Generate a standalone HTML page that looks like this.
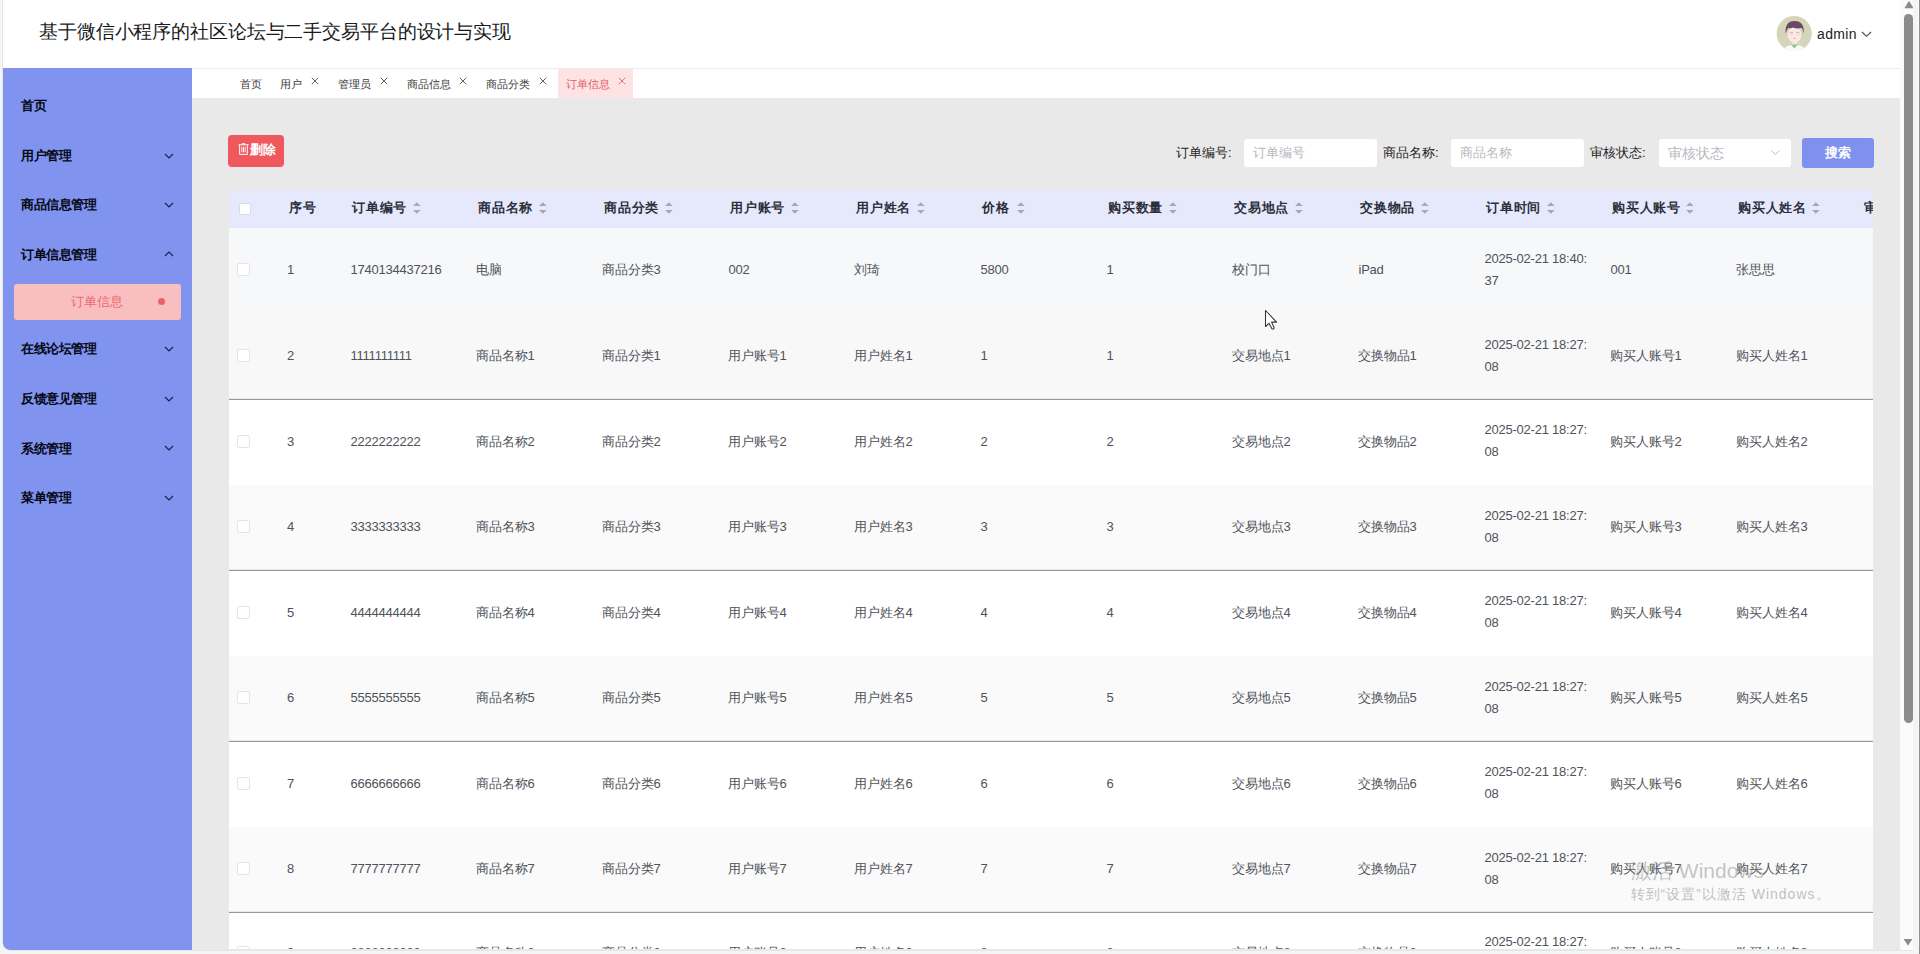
<!DOCTYPE html>
<html><head><meta charset="utf-8">
<style>
*{box-sizing:border-box;margin:0;padding:0}
html,body{width:1920px;height:954px;overflow:hidden;background:#f4f5f5;font-family:"Liberation Sans",sans-serif}
.abs{position:absolute}
#win{position:absolute;left:3px;top:0;width:1916px;height:950px;background:#fff;overflow:hidden;border-bottom-left-radius:7px;border-bottom-right-radius:7px}
#lb{position:absolute;left:2px;top:0;width:1px;height:944px;background:#e4e4e4}
#rb{position:absolute;left:1918.5px;top:0;width:1.5px;height:954px;background:#8f8f8f}
.t{position:absolute;white-space:nowrap;line-height:1}
#header{position:absolute;left:0;top:0;width:1897px;height:68px;background:#fff}
#title{left:36px;top:22px;letter-spacing:-0.12px;font-size:19px;color:#1a1a1a}
#side{position:absolute;left:0;top:68px;width:189px;height:882px;background:#8093ef}
.mi{position:absolute;left:18px;font-size:13px;font-weight:bold;color:#050814;line-height:1;letter-spacing:-0.45px}
.chev{position:absolute;left:160.5px;width:10px;height:6px}
#tabs{position:absolute;left:189px;top:68px;width:1708px;height:30px;background:#fff;border-top:1px solid #ececec}
.tab{position:absolute;top:10px;font-size:11px;color:#3f3f3f;line-height:1;white-space:nowrap}
.tx{position:absolute;top:6px;font-size:11px;color:#555;line-height:1}
#content{position:absolute;left:189px;top:98px;width:1709px;height:852px;background:#e9e9e9}
#sb{position:absolute;left:1897.3px;top:0;width:21px;height:949px;background:#fbfbfb}
.lbl{font-size:13px;color:#222;}
.inp{position:absolute;background:#fff;border-radius:3px;height:28px;top:139px}
.ph{font-size:13px;color:#b6b9c0}
.hd{font-size:13px;font-weight:bold;color:#2b2f3a;letter-spacing:0.7px}
.cell{font-size:13px;color:#4f5259}
.n{letter-spacing:-0.23px}
.cb{position:absolute;width:13px;height:13px;background:#fff;border:1px solid #e3e5ea;border-radius:2px}
</style></head><body>
<div id="win">

<div id="header"><div class="t" id="title">基于微信小程序的社区论坛与二手交易平台的设计与实现</div>
<svg class="abs" style="left:1773px;top:15px" width="36" height="36" viewBox="0 0 36 36">
<defs><clipPath id="cp"><circle cx="18.2" cy="18.6" r="17.6"/></clipPath></defs>
<circle cx="18.2" cy="18.6" r="17.6" fill="#d4d5b9"/>
<g clip-path="url(#cp)">
<path d="M5 40 Q6 30.5 18.4 29.8 Q30.5 30.5 31.5 40 Z" fill="#fbfbf9"/>
<rect x="15.8" y="24" width="5.2" height="6.5" fill="#f8e2d8"/>
<path d="M14.8 29.4 L18.4 33.4 L22 29.4 Z" fill="#8fc79c"/>
<ellipse cx="18.6" cy="19.8" rx="6.9" ry="7.6" fill="#fbe9e3"/>
<path d="M9.6 18.5 Q8.6 5.9 18.6 5.9 Q28.6 5.9 27.8 18.5 Q27 14.5 25.6 12.8 Q21 14.5 17 12.6 Q14 14 12.2 12.8 Q10.8 15 9.6 18.5 Z" fill="#6a4868"/>
<path d="M13.8 17.8 Q15.4 17 17 17.8 M20.2 17.8 Q21.8 17 23.4 17.8" fill="none" stroke="#b8948c" stroke-width="0.7"/>
<path d="M14 19.6 h2.6 M20.6 19.6 h2.6" stroke="#d9c4bc" stroke-width="0.6"/>
<ellipse cx="18.5" cy="23.3" rx="1.3" ry="0.6" fill="#e8a0a0"/>
</g></svg>
<div class="t" style="left:1814px;top:27px;font-size:14px;color:#222;letter-spacing:0.35px">admin</div>
<svg class="abs" style="left:1858px;top:31px" width="11" height="7" viewBox="0 0 11 7"><path d="M1 1 L5.5 5.3 L10 1" fill="none" stroke="#444" stroke-width="1.1"/></svg>
</div>
<div id="side">
<div class="mi" style="top:31px">首页</div>
<div class="mi" style="top:81px">用户管理</div>
<svg class="chev" style="top:84.5px" viewBox="0 0 10 6"><path d="M1 1 L5 5 L9 1" fill="none" stroke="#1b2150" stroke-width="1.2"/></svg>
<div class="mi" style="top:130px">商品信息管理</div>
<svg class="chev" style="top:134px" viewBox="0 0 10 6"><path d="M1 1 L5 5 L9 1" fill="none" stroke="#1b2150" stroke-width="1.2"/></svg>
<div class="mi" style="top:180px">订单信息管理</div>
<svg class="chev" style="top:182.5px" viewBox="0 0 10 6"><path d="M1 5 L5 1 L9 5" fill="none" stroke="#1b2150" stroke-width="1.2"/></svg>
<div class="mi" style="top:274px">在线论坛管理</div>
<svg class="chev" style="top:277.5px" viewBox="0 0 10 6"><path d="M1 1 L5 5 L9 1" fill="none" stroke="#1b2150" stroke-width="1.2"/></svg>
<div class="mi" style="top:324px">反馈意见管理</div>
<svg class="chev" style="top:327.5px" viewBox="0 0 10 6"><path d="M1 1 L5 5 L9 1" fill="none" stroke="#1b2150" stroke-width="1.2"/></svg>
<div class="mi" style="top:374px">系统管理</div>
<svg class="chev" style="top:377px" viewBox="0 0 10 6"><path d="M1 1 L5 5 L9 1" fill="none" stroke="#1b2150" stroke-width="1.2"/></svg>
<div class="mi" style="top:423px">菜单管理</div>
<svg class="chev" style="top:426.5px" viewBox="0 0 10 6"><path d="M1 1 L5 5 L9 1" fill="none" stroke="#1b2150" stroke-width="1.2"/></svg>
<div class="abs" style="left:11px;top:216px;width:167px;height:36px;background:#f9bec0;border-radius:3px"></div>
<div class="t" style="left:68px;top:227px;font-size:13px;color:#ec6a70">订单信息</div>
<div class="abs" style="left:154.5px;top:229.5px;width:7px;height:7px;border-radius:50%;background:#e8646a"></div>
</div>
<div id="tabs">
<div class="abs" style="left:366px;top:0px;width:75px;height:29px;background:#fde3e4"></div>
<div class="tab" style="left:48px;color:#3a3a3a">首页</div>
<div class="tab" style="left:88px;color:#3a3a3a">用户</div>
<svg class="abs" style="left:119px;top:8px" width="8" height="8" viewBox="0 0 8 8"><path d="M0.8 0.8 L7.2 7.2 M7.2 0.8 L0.8 7.2" stroke="#444" stroke-width="0.85"/></svg>
<div class="tab" style="left:146px;color:#3a3a3a">管理员</div>
<svg class="abs" style="left:188px;top:8px" width="8" height="8" viewBox="0 0 8 8"><path d="M0.8 0.8 L7.2 7.2 M7.2 0.8 L0.8 7.2" stroke="#444" stroke-width="0.85"/></svg>
<div class="tab" style="left:215px;color:#3a3a3a">商品信息</div>
<svg class="abs" style="left:267px;top:8px" width="8" height="8" viewBox="0 0 8 8"><path d="M0.8 0.8 L7.2 7.2 M7.2 0.8 L0.8 7.2" stroke="#444" stroke-width="0.85"/></svg>
<div class="tab" style="left:294px;color:#3a3a3a">商品分类</div>
<svg class="abs" style="left:347px;top:8px" width="8" height="8" viewBox="0 0 8 8"><path d="M0.8 0.8 L7.2 7.2 M7.2 0.8 L0.8 7.2" stroke="#444" stroke-width="0.85"/></svg>
<div class="tab" style="left:374px;color:#de5b62">订单信息</div>
<svg class="abs" style="left:426px;top:8px" width="8" height="8" viewBox="0 0 8 8"><path d="M0.8 0.8 L7.2 7.2 M7.2 0.8 L0.8 7.2" stroke="#d9606a" stroke-width="0.85"/></svg>
</div>
<div id="content">
<div class="abs" style="left:36px;top:37px;width:56px;height:32px;background:#f0585e;border-radius:4px"></div>
<svg class="abs" style="left:46px;top:45px" width="11" height="12" viewBox="0 0 11 12"><path d="M0.3 1.8 H10.7 M4.2 1.8 V0.6 H6.8 V1.8 M1.6 1.8 V11.4 H9.4 V1.8 M3.8 3.8 V9.4 M5.5 3.8 V9.4 M7.2 3.8 V9.4" fill="none" stroke="#fff" stroke-width="0.95"/></svg>
<div class="t" style="left:58px;top:45px;font-size:13px;color:#fff;font-weight:bold">删除</div>
</div>
<div class="t lbl" style="left:1173px;top:146px">订单编号:</div>
<div class="inp" style="left:1241px;width:133px"></div><div class="t ph" style="left:1250px;top:146px">订单编号</div>
<div class="t lbl" style="left:1380px;top:146px">商品名称:</div>
<div class="inp" style="left:1448px;width:133px"></div><div class="t ph" style="left:1457px;top:146px">商品名称</div>
<div class="t lbl" style="left:1587px;top:146px">审核状态:</div>
<div class="inp" style="left:1656px;width:132px"></div><div class="t ph" style="left:1665px;top:146px;font-size:14px">审核状态</div>
<svg class="abs" style="left:1768px;top:150px" width="9" height="6" viewBox="0 0 9 6"><path d="M0.5 0.5 L4.5 4.5 L8.5 0.5" fill="none" stroke="#b9bcc2" stroke-width="1"/></svg>
<div class="abs" style="left:1799px;top:138px;width:71.5px;height:29.5px;background:#7f91ee;border-radius:3px"></div>
<div class="t" style="left:1821.5px;top:146px;font-size:13px;color:#fff;font-weight:bold">搜索</div>
<div class="abs" style="left:0;top:0;width:1870px;height:949px;overflow:hidden">
<div class="abs" style="left:227px;top:190px;width:1643px;height:38px;background:#e6e9fb"></div>
<div class="cb" style="left:236px;top:203px;width:12px;height:12px;border-color:#d9dce8"></div>
<div class="t hd" style="left:286px;top:201px">序号</div>
<div class="t hd" style="left:349.3px;top:201px">订单编号</div>
<svg class="abs" style="left:409.7px;top:202px" width="8" height="12" viewBox="0 0 8 12"><path d="M3.9 0.2 L7.7 4.0 H0.1 Z M3.9 11.8 L7.7 8.0 H0.1 Z" fill="#a4a8b6"/></svg>
<div class="t hd" style="left:475.3px;top:201px">商品名称</div>
<svg class="abs" style="left:535.7px;top:202px" width="8" height="12" viewBox="0 0 8 12"><path d="M3.9 0.2 L7.7 4.0 H0.1 Z M3.9 11.8 L7.7 8.0 H0.1 Z" fill="#a4a8b6"/></svg>
<div class="t hd" style="left:601.3px;top:201px">商品分类</div>
<svg class="abs" style="left:661.7px;top:202px" width="8" height="12" viewBox="0 0 8 12"><path d="M3.9 0.2 L7.7 4.0 H0.1 Z M3.9 11.8 L7.7 8.0 H0.1 Z" fill="#a4a8b6"/></svg>
<div class="t hd" style="left:727.3px;top:201px">用户账号</div>
<svg class="abs" style="left:787.7px;top:202px" width="8" height="12" viewBox="0 0 8 12"><path d="M3.9 0.2 L7.7 4.0 H0.1 Z M3.9 11.8 L7.7 8.0 H0.1 Z" fill="#a4a8b6"/></svg>
<div class="t hd" style="left:853.3px;top:201px">用户姓名</div>
<svg class="abs" style="left:913.7px;top:202px" width="8" height="12" viewBox="0 0 8 12"><path d="M3.9 0.2 L7.7 4.0 H0.1 Z M3.9 11.8 L7.7 8.0 H0.1 Z" fill="#a4a8b6"/></svg>
<div class="t hd" style="left:979.3px;top:201px">价格</div>
<svg class="abs" style="left:1013.7px;top:202px" width="8" height="12" viewBox="0 0 8 12"><path d="M3.9 0.2 L7.7 4.0 H0.1 Z M3.9 11.8 L7.7 8.0 H0.1 Z" fill="#a4a8b6"/></svg>
<div class="t hd" style="left:1105.3px;top:201px">购买数量</div>
<svg class="abs" style="left:1165.7px;top:202px" width="8" height="12" viewBox="0 0 8 12"><path d="M3.9 0.2 L7.7 4.0 H0.1 Z M3.9 11.8 L7.7 8.0 H0.1 Z" fill="#a4a8b6"/></svg>
<div class="t hd" style="left:1231.3px;top:201px">交易地点</div>
<svg class="abs" style="left:1291.7px;top:202px" width="8" height="12" viewBox="0 0 8 12"><path d="M3.9 0.2 L7.7 4.0 H0.1 Z M3.9 11.8 L7.7 8.0 H0.1 Z" fill="#a4a8b6"/></svg>
<div class="t hd" style="left:1357.3px;top:201px">交换物品</div>
<svg class="abs" style="left:1417.7px;top:202px" width="8" height="12" viewBox="0 0 8 12"><path d="M3.9 0.2 L7.7 4.0 H0.1 Z M3.9 11.8 L7.7 8.0 H0.1 Z" fill="#a4a8b6"/></svg>
<div class="t hd" style="left:1483.3px;top:201px">订单时间</div>
<svg class="abs" style="left:1543.7px;top:202px" width="8" height="12" viewBox="0 0 8 12"><path d="M3.9 0.2 L7.7 4.0 H0.1 Z M3.9 11.8 L7.7 8.0 H0.1 Z" fill="#a4a8b6"/></svg>
<div class="t hd" style="left:1609.3px;top:201px">购买人账号</div>
<svg class="abs" style="left:1682.7px;top:202px" width="8" height="12" viewBox="0 0 8 12"><path d="M3.9 0.2 L7.7 4.0 H0.1 Z M3.9 11.8 L7.7 8.0 H0.1 Z" fill="#a4a8b6"/></svg>
<div class="t hd" style="left:1735.3px;top:201px">购买人姓名</div>
<svg class="abs" style="left:1808.7px;top:202px" width="8" height="12" viewBox="0 0 8 12"><path d="M3.9 0.2 L7.7 4.0 H0.1 Z M3.9 11.8 L7.7 8.0 H0.1 Z" fill="#a4a8b6"/></svg>
<div class="t hd" style="left:1861.3px;top:201px">审核状态</div>
<div class="abs" style="left:226px;top:228px;width:1644px;height:86px;background:#f7f8fa"></div>
<div class="cb" style="left:234px;top:263.0px"></div>
<div class="t cell" style="left:284px;top:263.0px"><span class="n">1</span></div>
<div class="t cell" style="left:347.5px;top:263.0px"><span class="n">1740134437216</span></div>
<div class="t cell" style="left:472.5px;top:263.0px">电脑</div>
<div class="t cell" style="left:598.5px;top:263.0px">商品分类<span class="n">3</span></div>
<div class="t cell" style="left:725.5px;top:263.0px"><span class="n">002</span></div>
<div class="t cell" style="left:850.5px;top:263.0px">刘琦</div>
<div class="t cell" style="left:977.5px;top:263.0px"><span class="n">5800</span></div>
<div class="t cell" style="left:1103.5px;top:263.0px"><span class="n">1</span></div>
<div class="t cell" style="left:1228.5px;top:263.0px">校门口</div>
<div class="t cell" style="left:1355.5px;top:263.0px"><span class="n">iPad</span></div>
<div class="t cell" style="left:1481.5px;top:247.5px;line-height:22px"><span class="n">2025-02-21 18:40:</span><br><span class="n">37</span></div>
<div class="t cell" style="left:1607.5px;top:263.0px"><span class="n">001</span></div>
<div class="t cell" style="left:1732.5px;top:263.0px">张思思</div>
<div class="abs" style="left:226px;top:314px;width:1644px;height:84px;background:#f8f8f9"></div>
<div class="abs" style="left:226px;top:399px;width:1644px;height:1px;background:#999"></div>
<div class="cb" style="left:234px;top:349.0px"></div>
<div class="t cell" style="left:284px;top:349.0px"><span class="n">2</span></div>
<div class="t cell" style="left:347.5px;top:349.0px"><span class="n">1111111111</span></div>
<div class="t cell" style="left:472.5px;top:349.0px">商品名称<span class="n">1</span></div>
<div class="t cell" style="left:598.5px;top:349.0px">商品分类<span class="n">1</span></div>
<div class="t cell" style="left:724.5px;top:349.0px">用户账号<span class="n">1</span></div>
<div class="t cell" style="left:850.5px;top:349.0px">用户姓名<span class="n">1</span></div>
<div class="t cell" style="left:977.5px;top:349.0px"><span class="n">1</span></div>
<div class="t cell" style="left:1103.5px;top:349.0px"><span class="n">1</span></div>
<div class="t cell" style="left:1228.5px;top:349.0px">交易地点<span class="n">1</span></div>
<div class="t cell" style="left:1354.5px;top:349.0px">交换物品<span class="n">1</span></div>
<div class="t cell" style="left:1481.5px;top:333.5px;line-height:22px"><span class="n">2025-02-21 18:27:</span><br><span class="n">08</span></div>
<div class="t cell" style="left:1606.5px;top:349.0px">购买人账号<span class="n">1</span></div>
<div class="t cell" style="left:1732.5px;top:349.0px">购买人姓名<span class="n">1</span></div>
<div class="abs" style="left:226px;top:400px;width:1644px;height:85px;background:#ffffff"></div>
<div class="cb" style="left:234px;top:434.5px"></div>
<div class="t cell" style="left:284px;top:434.5px"><span class="n">3</span></div>
<div class="t cell" style="left:347.5px;top:434.5px"><span class="n">2222222222</span></div>
<div class="t cell" style="left:472.5px;top:434.5px">商品名称<span class="n">2</span></div>
<div class="t cell" style="left:598.5px;top:434.5px">商品分类<span class="n">2</span></div>
<div class="t cell" style="left:724.5px;top:434.5px">用户账号<span class="n">2</span></div>
<div class="t cell" style="left:850.5px;top:434.5px">用户姓名<span class="n">2</span></div>
<div class="t cell" style="left:977.5px;top:434.5px"><span class="n">2</span></div>
<div class="t cell" style="left:1103.5px;top:434.5px"><span class="n">2</span></div>
<div class="t cell" style="left:1228.5px;top:434.5px">交易地点<span class="n">2</span></div>
<div class="t cell" style="left:1354.5px;top:434.5px">交换物品<span class="n">2</span></div>
<div class="t cell" style="left:1481.5px;top:419.0px;line-height:22px"><span class="n">2025-02-21 18:27:</span><br><span class="n">08</span></div>
<div class="t cell" style="left:1606.5px;top:434.5px">购买人账号<span class="n">2</span></div>
<div class="t cell" style="left:1732.5px;top:434.5px">购买人姓名<span class="n">2</span></div>
<div class="abs" style="left:226px;top:485px;width:1644px;height:84px;background:#fafafa"></div>
<div class="abs" style="left:226px;top:570px;width:1644px;height:1px;background:#999"></div>
<div class="cb" style="left:234px;top:520.0px"></div>
<div class="t cell" style="left:284px;top:520.0px"><span class="n">4</span></div>
<div class="t cell" style="left:347.5px;top:520.0px"><span class="n">3333333333</span></div>
<div class="t cell" style="left:472.5px;top:520.0px">商品名称<span class="n">3</span></div>
<div class="t cell" style="left:598.5px;top:520.0px">商品分类<span class="n">3</span></div>
<div class="t cell" style="left:724.5px;top:520.0px">用户账号<span class="n">3</span></div>
<div class="t cell" style="left:850.5px;top:520.0px">用户姓名<span class="n">3</span></div>
<div class="t cell" style="left:977.5px;top:520.0px"><span class="n">3</span></div>
<div class="t cell" style="left:1103.5px;top:520.0px"><span class="n">3</span></div>
<div class="t cell" style="left:1228.5px;top:520.0px">交易地点<span class="n">3</span></div>
<div class="t cell" style="left:1354.5px;top:520.0px">交换物品<span class="n">3</span></div>
<div class="t cell" style="left:1481.5px;top:504.5px;line-height:22px"><span class="n">2025-02-21 18:27:</span><br><span class="n">08</span></div>
<div class="t cell" style="left:1606.5px;top:520.0px">购买人账号<span class="n">3</span></div>
<div class="t cell" style="left:1732.5px;top:520.0px">购买人姓名<span class="n">3</span></div>
<div class="abs" style="left:226px;top:571px;width:1644px;height:85px;background:#ffffff"></div>
<div class="cb" style="left:234px;top:605.5px"></div>
<div class="t cell" style="left:284px;top:605.5px"><span class="n">5</span></div>
<div class="t cell" style="left:347.5px;top:605.5px"><span class="n">4444444444</span></div>
<div class="t cell" style="left:472.5px;top:605.5px">商品名称<span class="n">4</span></div>
<div class="t cell" style="left:598.5px;top:605.5px">商品分类<span class="n">4</span></div>
<div class="t cell" style="left:724.5px;top:605.5px">用户账号<span class="n">4</span></div>
<div class="t cell" style="left:850.5px;top:605.5px">用户姓名<span class="n">4</span></div>
<div class="t cell" style="left:977.5px;top:605.5px"><span class="n">4</span></div>
<div class="t cell" style="left:1103.5px;top:605.5px"><span class="n">4</span></div>
<div class="t cell" style="left:1228.5px;top:605.5px">交易地点<span class="n">4</span></div>
<div class="t cell" style="left:1354.5px;top:605.5px">交换物品<span class="n">4</span></div>
<div class="t cell" style="left:1481.5px;top:590.0px;line-height:22px"><span class="n">2025-02-21 18:27:</span><br><span class="n">08</span></div>
<div class="t cell" style="left:1606.5px;top:605.5px">购买人账号<span class="n">4</span></div>
<div class="t cell" style="left:1732.5px;top:605.5px">购买人姓名<span class="n">4</span></div>
<div class="abs" style="left:226px;top:656px;width:1644px;height:84px;background:#fafafa"></div>
<div class="abs" style="left:226px;top:741px;width:1644px;height:1px;background:#999"></div>
<div class="cb" style="left:234px;top:691.0px"></div>
<div class="t cell" style="left:284px;top:691.0px"><span class="n">6</span></div>
<div class="t cell" style="left:347.5px;top:691.0px"><span class="n">5555555555</span></div>
<div class="t cell" style="left:472.5px;top:691.0px">商品名称<span class="n">5</span></div>
<div class="t cell" style="left:598.5px;top:691.0px">商品分类<span class="n">5</span></div>
<div class="t cell" style="left:724.5px;top:691.0px">用户账号<span class="n">5</span></div>
<div class="t cell" style="left:850.5px;top:691.0px">用户姓名<span class="n">5</span></div>
<div class="t cell" style="left:977.5px;top:691.0px"><span class="n">5</span></div>
<div class="t cell" style="left:1103.5px;top:691.0px"><span class="n">5</span></div>
<div class="t cell" style="left:1228.5px;top:691.0px">交易地点<span class="n">5</span></div>
<div class="t cell" style="left:1354.5px;top:691.0px">交换物品<span class="n">5</span></div>
<div class="t cell" style="left:1481.5px;top:675.5px;line-height:22px"><span class="n">2025-02-21 18:27:</span><br><span class="n">08</span></div>
<div class="t cell" style="left:1606.5px;top:691.0px">购买人账号<span class="n">5</span></div>
<div class="t cell" style="left:1732.5px;top:691.0px">购买人姓名<span class="n">5</span></div>
<div class="abs" style="left:226px;top:742px;width:1644px;height:85px;background:#ffffff"></div>
<div class="cb" style="left:234px;top:776.5px"></div>
<div class="t cell" style="left:284px;top:776.5px"><span class="n">7</span></div>
<div class="t cell" style="left:347.5px;top:776.5px"><span class="n">6666666666</span></div>
<div class="t cell" style="left:472.5px;top:776.5px">商品名称<span class="n">6</span></div>
<div class="t cell" style="left:598.5px;top:776.5px">商品分类<span class="n">6</span></div>
<div class="t cell" style="left:724.5px;top:776.5px">用户账号<span class="n">6</span></div>
<div class="t cell" style="left:850.5px;top:776.5px">用户姓名<span class="n">6</span></div>
<div class="t cell" style="left:977.5px;top:776.5px"><span class="n">6</span></div>
<div class="t cell" style="left:1103.5px;top:776.5px"><span class="n">6</span></div>
<div class="t cell" style="left:1228.5px;top:776.5px">交易地点<span class="n">6</span></div>
<div class="t cell" style="left:1354.5px;top:776.5px">交换物品<span class="n">6</span></div>
<div class="t cell" style="left:1481.5px;top:761.0px;line-height:22px"><span class="n">2025-02-21 18:27:</span><br><span class="n">08</span></div>
<div class="t cell" style="left:1606.5px;top:776.5px">购买人账号<span class="n">6</span></div>
<div class="t cell" style="left:1732.5px;top:776.5px">购买人姓名<span class="n">6</span></div>
<div class="abs" style="left:226px;top:827px;width:1644px;height:84px;background:#fafafa"></div>
<div class="abs" style="left:226px;top:912px;width:1644px;height:1px;background:#999"></div>
<div class="cb" style="left:234px;top:862.0px"></div>
<div class="t cell" style="left:284px;top:862.0px"><span class="n">8</span></div>
<div class="t cell" style="left:347.5px;top:862.0px"><span class="n">7777777777</span></div>
<div class="t cell" style="left:472.5px;top:862.0px">商品名称<span class="n">7</span></div>
<div class="t cell" style="left:598.5px;top:862.0px">商品分类<span class="n">7</span></div>
<div class="t cell" style="left:724.5px;top:862.0px">用户账号<span class="n">7</span></div>
<div class="t cell" style="left:850.5px;top:862.0px">用户姓名<span class="n">7</span></div>
<div class="t cell" style="left:977.5px;top:862.0px"><span class="n">7</span></div>
<div class="t cell" style="left:1103.5px;top:862.0px"><span class="n">7</span></div>
<div class="t cell" style="left:1228.5px;top:862.0px">交易地点<span class="n">7</span></div>
<div class="t cell" style="left:1354.5px;top:862.0px">交换物品<span class="n">7</span></div>
<div class="t cell" style="left:1481.5px;top:846.5px;line-height:22px"><span class="n">2025-02-21 18:27:</span><br><span class="n">08</span></div>
<div class="t cell" style="left:1606.5px;top:862.0px">购买人账号<span class="n">7</span></div>
<div class="t cell" style="left:1732.5px;top:862.0px">购买人姓名<span class="n">7</span></div>
<div class="abs" style="left:226px;top:913px;width:1644px;height:85px;background:#ffffff"></div>
<div class="cb" style="left:234px;top:946.0px"></div>
<div class="t cell" style="left:284px;top:946.0px"><span class="n">9</span></div>
<div class="t cell" style="left:347.5px;top:946.0px"><span class="n">8888888888</span></div>
<div class="t cell" style="left:472.5px;top:946.0px">商品名称<span class="n">8</span></div>
<div class="t cell" style="left:598.5px;top:946.0px">商品分类<span class="n">8</span></div>
<div class="t cell" style="left:724.5px;top:946.0px">用户账号<span class="n">8</span></div>
<div class="t cell" style="left:850.5px;top:946.0px">用户姓名<span class="n">8</span></div>
<div class="t cell" style="left:977.5px;top:946.0px"><span class="n">8</span></div>
<div class="t cell" style="left:1103.5px;top:946.0px"><span class="n">8</span></div>
<div class="t cell" style="left:1228.5px;top:946.0px">交易地点<span class="n">8</span></div>
<div class="t cell" style="left:1354.5px;top:946.0px">交换物品<span class="n">8</span></div>
<div class="t cell" style="left:1481.5px;top:930.5px;line-height:22px"><span class="n">2025-02-21 18:27:</span><br><span class="n">08</span></div>
<div class="t cell" style="left:1606.5px;top:946.0px">购买人账号<span class="n">8</span></div>
<div class="t cell" style="left:1732.5px;top:946.0px">购买人姓名<span class="n">8</span></div>
</div>
<div id="sb"></div>
<svg class="abs" style="left:1900.8px;top:1px" width="10" height="8" viewBox="0 0 10 8"><path d="M5 0.3 L9.2 7 H0.8 Z" fill="#8a8a8a" stroke="#8a8a8a" stroke-width="0.6" stroke-linejoin="round"/></svg>
<div class="abs" style="left:1900.8px;top:14px;width:8.8px;height:709px;background:#8b8b8b;border-radius:4.4px"></div>
<div class="abs" style="left:1910px;top:0;width:5px;height:949px;background:#f4f4f4"></div>
<svg class="abs" style="left:1900px;top:938px" width="10" height="8" viewBox="0 0 10 8"><path d="M5 7.5 L9.5 1 H0.5 Z" fill="#8a8a8a"/></svg>
<div class="t" style="left:1628px;top:860px;font-size:21px;color:rgba(150,150,150,0.55)">激活 Windows</div>
<div class="t" style="left:1627.5px;top:887px;font-size:14px;letter-spacing:1px;color:rgba(150,150,150,0.6)">转到“设置”以激活 Windows。</div>
<svg class="abs" style="left:1261px;top:309px" width="16" height="23" viewBox="0 0 16 23"><path d="M1.5 1.5 V17.5 L5 14.3 L7.8 19.6 Q8.6 20.4 9.6 19.8 Q10.3 19.2 9.9 18.2 L7.6 13.1 H12.6 Z" fill="#fff" stroke="#333" stroke-width="1.05" stroke-linejoin="round"/></svg>
</div>
<div id="lb"></div><div id="rb"></div><div class="abs" style="left:8px;top:950px;width:1905px;height:1px;background:#e6e6e6"></div>
</body></html>
